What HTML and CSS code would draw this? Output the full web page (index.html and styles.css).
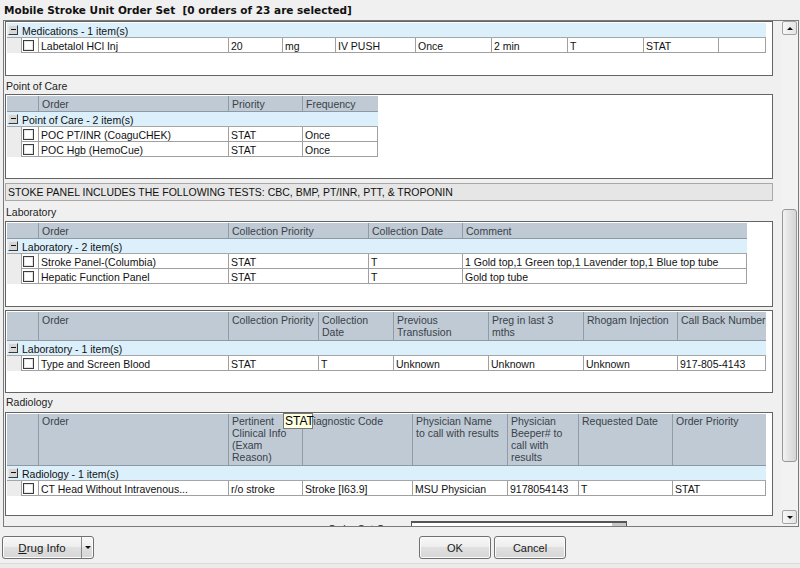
FILE: index.html
```html
<!DOCTYPE html>
<html>
<head>
<meta charset="utf-8">
<title>Mobile Stroke Unit Order Set</title>
<link rel="stylesheet" href="styles.css">
</head>
<body>
<div class="title">Mobile Stroke Unit Order Set&nbsp; [0 orders of 23 are selected]</div>
<div class="frame">
  <div class="content">
    <div class="box g-med h-med">
      <div class="tbl">
        <div class="grp"><span class="tog"></span>Medications - 1 item(s)</div>
        <div class="row"><span class="ind"></span><span class="chk"><i></i></span><span>Labetalol HCl Inj</span><span>20</span><span>mg</span><span>IV PUSH</span><span>Once</span><span>2 min</span><span>T</span><span>STAT</span><span></span></div>
      </div>
    </div>

    <div class="lbl lbl-poc">Point of Care</div>
    <div class="box g-poc h-poc">
      <div class="tbl">
        <div class="hdr"><span></span><span>Order</span><span>Priority</span><span>Frequency</span></div>
        <div class="grp"><span class="tog"></span>Point of Care - 2 item(s)</div>
        <div class="row"><span class="ind"></span><span class="chk"><i></i></span><span>POC PT/INR (CoaguCHEK)</span><span>STAT</span><span>Once</span></div>
        <div class="row"><span class="ind"></span><span class="chk"><i></i></span><span>POC Hgb (HemoCue)</span><span>STAT</span><span>Once</span></div>
      </div>
    </div>

    <div class="banner">STOKE PANEL INCLUDES THE FOLLOWING TESTS: CBC, BMP, PT/INR, PTT, &amp; TROPONIN</div>

    <div class="lbl lbl-lab">Laboratory</div>
    <div class="box g-lab h-lab">
      <div class="tbl">
        <div class="hdr"><span></span><span>Order</span><span>Collection Priority</span><span>Collection Date</span><span>Comment</span></div>
        <div class="grp"><span class="tog"></span>Laboratory - 2 item(s)</div>
        <div class="row"><span class="ind"></span><span class="chk"><i></i></span><span>Stroke Panel-(Columbia)</span><span>STAT</span><span>T</span><span>1 Gold top,1 Green top,1 Lavender top,1 Blue top tube</span></div>
        <div class="row"><span class="ind"></span><span class="chk"><i></i></span><span>Hepatic Function Panel</span><span>STAT</span><span>T</span><span>Gold top tube</span></div>
      </div>
    </div>

    <div class="box g-l2 h-l2">
      <div class="tbl">
        <div class="hdr"><span></span><span>Order</span><span>Collection Priority</span><span>Collection<br>Date</span><span>Previous<br>Transfusion</span><span>Preg in last 3<br>mths</span><span>Rhogam Injection</span><span>Call Back Number</span></div>
        <div class="grp"><span class="tog"></span>Laboratory - 1 item(s)</div>
        <div class="row"><span class="ind"></span><span class="chk"><i></i></span><span>Type and Screen Blood</span><span>STAT</span><span>T</span><span>Unknown</span><span>Unknown</span><span>Unknown</span><span>917-805-4143</span></div>
      </div>
    </div>

    <div class="lbl lbl-rad">Radiology</div>
    <div class="box g-rad h-rad">
      <div class="tbl">
        <div class="hdr"><span></span><span>Order</span><span>Pertinent<br>Clinical Info<br>(Exam<br>Reason)</span><span>Diagnostic Code</span><span>Physician Name<br>to call with results</span><span>Physician<br>Beeper# to<br>call with<br>results</span><span>Requested Date</span><span>Order Priority</span></div>
        <div class="grp"><span class="tog"></span>Radiology - 1 item(s)</div>
        <div class="row"><span class="ind"></span><span class="chk"><i></i></span><span>CT Head Without Intravenous...</span><span>r/o stroke</span><span>Stroke [I63.9]</span><span>MSU Physician</span><span>9178054143</span><span>T</span><span>STAT</span></div>
      </div>
    </div>

    <div class="osc">
      <div class="osc-label">Order Set Comment:</div>
      <div class="osc-box"><span class="osc-sb"></span></div>
    </div>
  </div>
  <div class="sb">
    <div class="sbb"><span class="tri-up"></span></div>
    <div class="thumb"></div>
    <div class="sbb sbb-down"><span class="tri-down"></span></div>
  </div>
  <div class="tip">STAT</div>
</div>
<div class="footer">
  <div class="split">
    <div class="split-main"><u>D</u>rug Info</div>
    <div class="split-arrow"><span class="tri-down"></span></div>
  </div>
  <div class="btn btn-ok">OK</div>
  <div class="btn btn-cancel">Cancel</div>
</div>
</body>
</html>
```

FILE: styles.css
```css
* { box-sizing: border-box; }
html, body { margin: 0; padding: 0; }
body {
  width: 800px;
  height: 568px;
  overflow: hidden;
  background: #f0f0f0;
  font-family: "Liberation Sans", Arial, sans-serif;
  font-size: 10.5px;
  color: #111;
}
.title {
  height: 20px;
  line-height: 20px;
  padding-left: 4px;
  font-family: "DejaVu Sans", Verdana, sans-serif;
  font-weight: bold;
  font-size: 10.5px;
  color: #111;
  white-space: nowrap;
}
.frame {
  position: relative;
  margin-left: 3px;
  width: 796px;
  height: 507px;
  border: 1px solid #7a7a7a;
  display: flex;
  background: #f0f0f0;
}
.content {
  width: 777px;
  height: 100%;
  overflow: hidden;
  display: flex;
  flex-direction: column;
}
.box {
  flex: none;
  margin-left: 1px;
  width: 768px;
  border: 1px solid #646464;
  background: #fff;
  padding: 1px;
  overflow: hidden;
}
.h-med { height: 55px; }
.h-poc { height: 85px; }
.h-lab { height: 86px; }
.h-l2 { height: 83px; margin-top: 3px; }
.h-rad { height: 104px; }

.g-med { --cols: 54px 53px 80px 76px 76px 76px 75px 48px; }
.g-poc { --cols: 74px 76px; }
.g-lab { --cols: 140px 94px 285px; }
.g-l2 { --cols: 90px 75px 95px 95px 94px 89px; }
.g-rad { --cols: 74px 110px 95px 71px 94px 94px; }

.lbl {
  flex: none;
  padding-left: 2px;
  line-height: 16px;
  color: #222;
}
.lbl-poc { height: 18px; padding-top: 2px; }
.lbl-lab { height: 20px; padding-top: 3px; }
.lbl-rad { height: 19px; padding-top: 1px; }

.banner {
  flex: none;
  margin: 4px 0 0 1px;
  width: 768px;
  height: 18px;
  border: 1px solid #a8a8a8;
  background: #e6e6e6;
  padding-left: 2px;
  line-height: 16px;
  color: #111;
  white-space: nowrap;
}

.tbl { width: max-content; }
.hdr {
  display: grid;
  grid-template-columns: 31px 190px var(--cols);
  background: #bfcad4;
  border-bottom: 1px solid #8e99a4;
  color: #3a4149;
  height: 16px;
}
.g-l2 .hdr { height: 29px; }
.g-rad .hdr { height: 52px; }
.hdr > span {
  border-left: 1px solid #909ca7;
  padding: 2px 0 0 3px;
  line-height: 12px;
  white-space: nowrap;
  overflow: hidden;
}
.g-rad .hdr > span { padding-top: 1px; }
.hdr > span:first-child { border-left: 0; }

.grp {
  height: 15px;
  background: #dcf0fb;
  border-bottom: 1px solid #a6a6a6;
  display: flex;
  align-items: center;
  padding: 1px 0 0 1px;
  line-height: 14px;
  color: #111;
  white-space: nowrap;
}
.tog {
  position: relative;
  width: 10px;
  height: 10px;
  margin: -1px 4px 0 0;
  background: #d6d6d6;
  border-top: 1px solid #e8e8e8;
  border-left: 1px solid #e8e8e8;
  border-right: 1px solid #3a3a3a;
  border-bottom: 1px solid #3a3a3a;
}
.tog::after {
  content: "";
  position: absolute;
  left: 2px;
  top: 3px;
  width: 5px;
  height: 1px;
  background: #111;
}

.row {
  display: grid;
  grid-template-columns: 14px 17px 190px var(--cols);
  height: 15px;
  line-height: 16px;
}
.row > span {
  border-left: 1px solid #a0a0a0;
  border-bottom: 1px solid #a0a0a0;
  padding-left: 2px;
  white-space: nowrap;
  overflow: hidden;
}
.row > span:last-child { border-right: 1px solid #a0a0a0; }
.row > .ind {
  border: 0;
  background: #ececec;
  padding: 0;
}
.row > .chk {
  display: flex;
  align-items: center;
  padding-left: 1px;
}
.chk i {
  display: block;
  width: 11px;
  height: 11px;
  border: 1px solid #3c3c3c;
  background: #fff;
  box-shadow: inset 0 0 0 1px #e4e4e4;
}

.osc {
  flex: none;
  display: flex;
  margin-top: 5px;
  height: 20px;
}
.osc-label {
  margin-left: 324px;
  width: 83px;
  overflow: hidden;
  white-space: nowrap;
  padding-top: 1px;
  line-height: 14px;
  color: #222;
}
.osc-box {
  position: relative;
  width: 216px;
  height: 20px;
  border: 1px solid #555;
  border-top-width: 2px;
  background: #fff;
}
.osc-sb {
  position: absolute;
  right: 0;
  top: 0;
  width: 14px;
  height: 6px;
  background: #c8c8c8;
}

.sb {
  width: 17px;
  height: 100%;
  display: flex;
  flex-direction: column;
  padding-left: 1px;
  background: #f2f2f2;
}
.sbb {
  flex: none;
  width: 15px;
  height: 14px;
  border: 1px solid #a3a3a3;
  border-radius: 2px;
  background: linear-gradient(to right, #f7f7f7, #e4e4e4);
  display: flex;
  align-items: center;
  justify-content: center;
}
.sbb-down { margin-top: auto; margin-bottom: 2px; }
.thumb {
  flex: none;
  margin-top: 174px;
  width: 15px;
  height: 253px;
  border: 1px solid #979797;
  border-radius: 3px;
  background: linear-gradient(to right, #f3f3f3, #e3e3e3 45%, #d5d5d5);
}
.tri-up {
  width: 0;
  height: 0;
  border-left: 3px solid transparent;
  border-right: 3px solid transparent;
  border-bottom: 3px solid #111;
}
.tri-down {
  width: 0;
  height: 0;
  border-left: 3px solid transparent;
  border-right: 3px solid transparent;
  border-top: 3px solid #111;
}

.tip {
  position: absolute;
  left: 279px;
  top: 392px;
  width: 30px;
  height: 16px;
  background: #ffffe1;
  border: 1px solid #767676;
  font-size: 12px;
  line-height: 14px;
  padding-left: 1px;
  color: #000;
}

.footer {
  height: 41px;
  display: flex;
  align-items: flex-start;
  padding: 9px 0 0 2px;
  background: linear-gradient(to bottom, #f0f0f0 0, #f0f0f0 36px, #dadada 36px, #dadada 37px, #ebebeb 37px);
}
.split, .btn {
  height: 23px;
  border: 1px solid #707070;
  border-radius: 3px;
  background: linear-gradient(#f8f8f8, #eeeeee 45%, #e0e0e0 50%, #d6d6d6);
  box-shadow: inset 0 0 0 1px #fbfbfb;
  font-size: 11px;
  color: #1a1a1a;
}
.split {
  width: 92px;
  display: flex;
}
.split-main {
  width: 78px;
  display: flex;
  align-items: center;
  justify-content: center;
  font-size: 11.5px;
}
.split-arrow {
  flex: 1;
  border-left: 1px solid #8a8a8a;
  display: flex;
  align-items: center;
  justify-content: center;
}
.btn {
  width: 72px;
  display: flex;
  align-items: center;
  justify-content: center;
}
.btn-ok { margin-left: 325px; }
.btn-cancel { margin-left: 3px; }
```
